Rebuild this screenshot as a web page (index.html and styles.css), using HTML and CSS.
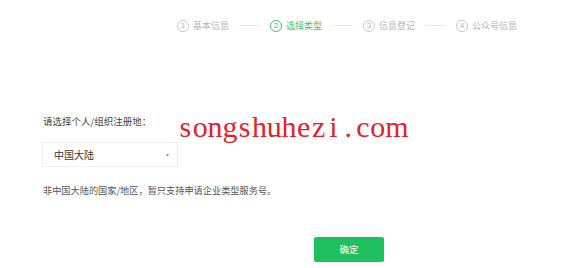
FILE: index.html
```html
<!DOCTYPE html>
<html lang="zh-CN">
<head>
    <meta charset="UTF-8">
    <title>选择类型</title>
    <link rel="stylesheet" href="styles.css">
</head>
<body>

<div class="steps">
    <div class="step"><span class="num">1</span><span class="name">基本信息</span></div>
    <span class="line"></span>
    <div class="step active"><span class="num">2</span><span class="name">选择类型</span></div>
    <span class="line"></span>
    <div class="step"><span class="num">3</span><span class="name">信息登记</span></div>
    <span class="line"></span>
    <div class="step"><span class="num">4</span><span class="name">公众号信息</span></div>
</div>

<section class="form">
    <p class="label">请选择个人/组织注册地：</p>
    <div class="select">
        <span>中国大陆</span>
        <span class="arrow">&#9662;</span>
    </div>
    <p class="tip">非中国大陆的国家/地区，暂只支持申请企业类型服务号。</p>
    <div class="actions">
        <button type="button" class="btn">确定</button>
    </div>
</section>

<div class="watermark"><span>s</span><span>o</span><span>n</span><span>g</span><span>s</span><span>h</span><span>u</span><span>h</span><span>e</span><span>z</span><span>i</span><span>.</span><span>c</span><span>o</span><span>m</span></div>

</body>
</html>
```

FILE: styles.css
```css
/* 选择类型 */
body {
    margin: 0;
    background-color: #fff;
    font-family: "Noto Sans CJK SC", "Liberation Sans", sans-serif;
    color: #353535;
    position: relative;
    height: 268px;
    overflow: hidden;
}
.steps {
    display: flex;
    align-items: center;
    padding: 19px 0 0 177px;
    height: 13px;
}
.step {
    display: flex;
    align-items: center;
    gap: 4px;
    color: #b5b5b5;
    font-size: 9px;
    line-height: 12px;
}
.num {
    width: 10px;
    height: 10px;
    border: 1px solid #c8c8c8;
    border-radius: 50%;
    font-size: 8px;
    line-height: 10px;
    text-align: center;
    font-family: "Liberation Sans", sans-serif;
}
.step.active {
    color: #3cc46b;
}
.step.active .num {
    border-color: #3cc46b;
}
.line {
    width: 21px;
    height: 1px;
    background-color: #e7e7e7;
    margin: 0 10px;
}
.form {
    padding: 0 0 0 43px;
}
.label {
    margin: 83px 0 0;
    font-size: 9.5px;
    line-height: 12px;
    color: #444;
}
.select {
    display: flex;
    justify-content: space-between;
    align-items: center;
    box-sizing: border-box;
    width: 136px;
    height: 25px;
    margin: 15px 0 0 -1px;
    padding: 0 8px 0 11px;
    border: 1px solid #f0f0f0;
    font-size: 10px;
    color: #353535;
}
.arrow {
    font-size: 6px;
    color: #999;
}
.tip {
    margin: 17px 0 0;
    font-size: 9.2px;
    line-height: 12px;
    color: #555;
}
.actions {
    padding: 38px 0 0 271px;
}
.btn {
    width: 70px;
    height: 25px;
    border: 0;
    border-radius: 2px;
    background-color: #1fc05d;
    color: #fff;
    font-family: "Noto Sans CJK SC", sans-serif;
    font-size: 9.5px;
    padding: 0;
}
.watermark {
    position: absolute;
    left: 178px;
    top: 110px;
    display: flex;
    font-family: "Liberation Serif", serif;
    font-size: 30px;
    line-height: 34px;
    color: #e2222c;
}
.watermark span {
    width: 14.8px;
    text-align: center;
}
```
